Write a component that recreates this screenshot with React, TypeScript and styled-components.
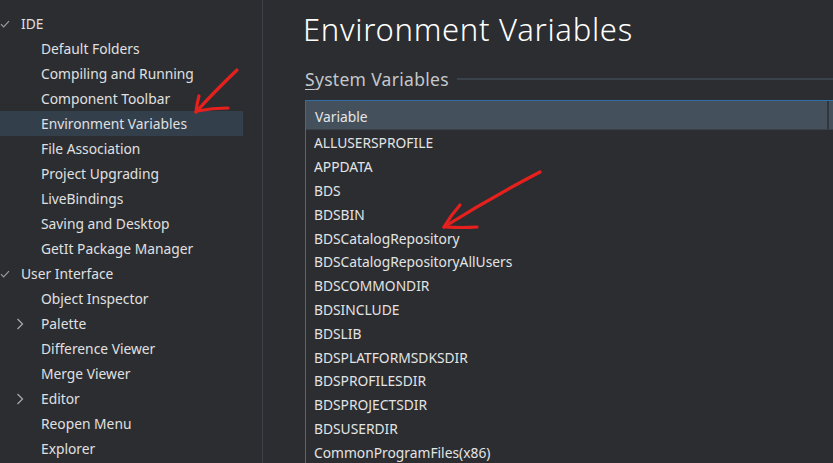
import React from "react"
import styled, { createGlobalStyle } from "styled-components"

type TreeItem = {
  label: string
  level: 0 | 1
  toggle?: "open" | "closed"
  selected?: boolean
}

const treeItems: TreeItem[] = [
  { label: "IDE", level: 0, toggle: "open" },
  { label: "Default Folders", level: 1 },
  { label: "Compiling and Running", level: 1 },
  { label: "Component Toolbar", level: 1 },
  { label: "Environment Variables", level: 1, selected: true },
  { label: "File Association", level: 1 },
  { label: "Project Upgrading", level: 1 },
  { label: "LiveBindings", level: 1 },
  { label: "Saving and Desktop", level: 1 },
  { label: "GetIt Package Manager", level: 1 },
  { label: "User Interface", level: 0, toggle: "open" },
  { label: "Object Inspector", level: 1 },
  { label: "Palette", level: 1, toggle: "closed" },
  { label: "Difference Viewer", level: 1 },
  { label: "Merge Viewer", level: 1 },
  { label: "Editor", level: 1, toggle: "closed" },
  { label: "Reopen Menu", level: 1 },
  { label: "Explorer", level: 1 },
]

const variables = [
  "ALLUSERSPROFILE",
  "APPDATA",
  "BDS",
  "BDSBIN",
  "BDSCatalogRepository",
  "BDSCatalogRepositoryAllUsers",
  "BDSCOMMONDIR",
  "BDSINCLUDE",
  "BDSLIB",
  "BDSPLATFORMSDKSDIR",
  "BDSPROFILESDIR",
  "BDSPROJECTSDIR",
  "BDSUSERDIR",
  "CommonProgramFiles(x86)",
]

const Toggle = ({ kind }: { kind?: "open" | "closed" }) => {
  if (!kind) return null
  if (kind === "open") {
    return (
      <svg width="10" height="10" viewBox="0 0 10 10">
        <path d="M1 5.2 L3.6 7.8 L9 2.2" fill="none" stroke="#9a9da2" strokeWidth="1.2" />
      </svg>
    )
  }
  return (
    <svg width="10" height="12" viewBox="0 0 10 12">
      <path d="M2.5 1 L7.5 6 L2.5 11" fill="none" stroke="#a4a7ab" strokeWidth="1.3" />
    </svg>
  )
}

const App = () => {
  return (
    <>
      <GlobalStyle />
      <Window>
        <Sidebar>
          {treeItems.map((item) => (
            <TreeRow key={item.label} $selected={item.selected}>
              <ToggleCell $level={item.level}>
                <Toggle kind={item.toggle} />
              </ToggleCell>
              <TreeLabel>{item.label}</TreeLabel>
            </TreeRow>
          ))}
        </Sidebar>
        <Main>
          <Title>Environment Variables</Title>
          <Legend>
            <LegendText>
              <u>S</u>ystem Variables
            </LegendText>
            <LegendRule />
          </Legend>
          <Table>
            <HeaderRow>
              <HeaderCell>Variable</HeaderCell>
            </HeaderRow>
            {variables.map((name) => (
              <Row key={name}>{name}</Row>
            ))}
          </Table>
        </Main>
        {/* red annotation arrows drawn over the screenshot */}
        <Annotations width="833" height="463" viewBox="0 0 833 463">
          <g fill="none" stroke="#e5201d" strokeWidth="3.2" strokeLinecap="round" strokeLinejoin="round">
            <path d="M237 70 Q214 92 196 112" />
            <path d="M196 112 Q197 103 199 96" />
            <path d="M197 111 Q212 108 228 108" />
            <path d="M540 172 Q490 198 444 227" />
            <path d="M444 227 Q451 215 460 205" />
            <path d="M446 227 Q462 228 477 227" />
          </g>
        </Annotations>
      </Window>
    </>
  )
}

export default App

const GlobalStyle = createGlobalStyle`
  html, body {
    margin: 0;
    padding: 0;
    background: #2b2d31;
    overflow: hidden;
  }
  * {
    box-sizing: border-box;
  }
`

const Window = styled.div`
  position: relative;
  display: flex;
  width: 833px;
  height: 463px;
  overflow: hidden;
  background: #2b2d31;
  font-family: "Noto Sans", "Open Sans", sans-serif;
  color: #e2e2e2;
`

const Sidebar = styled.div`
  width: 263px;
  flex-shrink: 0;
  padding-top: 11px;
  padding-right: 19px;
  border-right: 1px solid #3d4248;
`

const TreeRow = styled.div<{ $selected?: boolean }>`
  display: flex;
  align-items: center;
  height: 25px;
  background: ${(p) => (p.$selected ? "#333f4b" : "transparent")};
`

const ToggleCell = styled.div<{ $level: number }>`
  display: flex;
  align-items: center;
  justify-content: center;
  width: 10px;
  margin-left: ${(p) => (p.$level === 0 ? 0 : 15)}px;
  margin-right: ${(p) => (p.$level === 0 ? 11 : 16)}px;
`

const TreeLabel = styled.span`
  font-size: 13.8px;
  color: #e0e0e0;
  white-space: nowrap;
`

const Main = styled.div`
  flex: 1;
  min-width: 0;
  padding: 9px 0 0 40px;
`

const Title = styled.h1`
  margin: 0;
  font-size: 31px;
  font-weight: 300;
  letter-spacing: 0.7px;
  line-height: 40px;
  color: #ffffff;
  white-space: nowrap;
`

const Legend = styled.div`
  display: flex;
  align-items: center;
  margin-top: 18px;
  margin-left: 2px;
  height: 24px;
`

const LegendText = styled.span`
  font-size: 17.5px;
  letter-spacing: 0.3px;
  color: #c4c7cb;
  white-space: nowrap;

  u {
    text-decoration-thickness: 1px;
    text-underline-offset: 3px;
  }
`

const LegendRule = styled.div`
  flex: 1;
  height: 2px;
  margin-left: 8px;
  background: #3a434c;
`

const Table = styled.div`
  margin-top: 9px;
  margin-left: 2px;
  border-top: 1px solid #2f6ea6;
  border-left: 1px solid #2f6ea6;
`

const HeaderRow = styled.div`
  display: flex;
  height: 29px;
  background: #44515c;
  border-bottom: 1px solid #3a4149;
`

const HeaderCell = styled.div`
  flex: 1;
  display: flex;
  align-items: center;
  padding-left: 9px;
  padding-top: 2px;
  font-size: 13.8px;
  color: #e6e6e6;
  border-right: 2px solid #33373c;
  margin-right: 4px;
`

const Row = styled.div`
  display: flex;
  align-items: center;
  height: 23.8px;
  padding-left: 8px;
  padding-top: 2px;
  font-size: 13.8px;
  color: #e4e4e4;
  white-space: nowrap;
`

const Annotations = styled.svg`
  position: absolute;
  inset: 0;
  pointer-events: none;
`
